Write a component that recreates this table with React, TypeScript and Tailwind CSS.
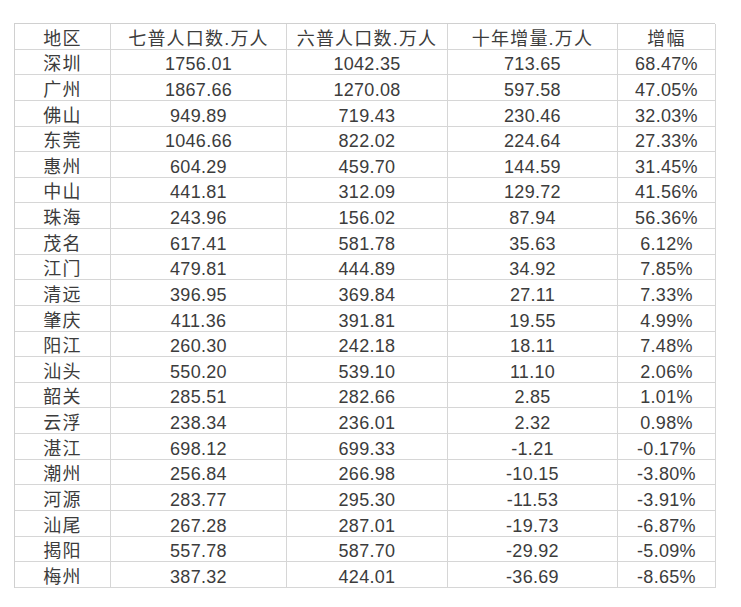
const headers = ['地区', '七普人口数.万人', '六普人口数.万人', '十年增量.万人', '增幅']

const rows: [string, string, string, string, string][] = [
  ['深圳', '1756.01', '1042.35', '713.65', '68.47%'],
  ['广州', '1867.66', '1270.08', '597.58', '47.05%'],
  ['佛山', '949.89', '719.43', '230.46', '32.03%'],
  ['东莞', '1046.66', '822.02', '224.64', '27.33%'],
  ['惠州', '604.29', '459.70', '144.59', '31.45%'],
  ['中山', '441.81', '312.09', '129.72', '41.56%'],
  ['珠海', '243.96', '156.02', '87.94', '56.36%'],
  ['茂名', '617.41', '581.78', '35.63', '6.12%'],
  ['江门', '479.81', '444.89', '34.92', '7.85%'],
  ['清远', '396.95', '369.84', '27.11', '7.33%'],
  ['肇庆', '411.36', '391.81', '19.55', '4.99%'],
  ['阳江', '260.30', '242.18', '18.11', '7.48%'],
  ['汕头', '550.20', '539.10', '11.10', '2.06%'],
  ['韶关', '285.51', '282.66', '2.85', '1.01%'],
  ['云浮', '238.34', '236.01', '2.32', '0.98%'],
  ['湛江', '698.12', '699.33', '-1.21', '-0.17%'],
  ['潮州', '256.84', '266.98', '-10.15', '-3.80%'],
  ['河源', '283.77', '295.30', '-11.53', '-3.91%'],
  ['汕尾', '267.28', '287.01', '-19.73', '-6.87%'],
  ['揭阳', '557.78', '587.70', '-29.92', '-5.09%'],
  ['梅州', '387.32', '424.01', '-36.69', '-8.65%'],
]

function Cell({ text, cjk }: { text: string; cjk?: boolean }) {
  return (
    <div
      className={
        cjk
          ? 'flex items-end justify-center border-r border-b border-[#d6d6d6] text-[18px] leading-none tracking-[1.2px] pb-[1px]'
          : 'flex items-end justify-center border-r border-b border-[#d6d6d6] text-[18px] leading-none tracking-[0.3px] pb-[1px]'
      }
    >
      {text}
    </div>
  )
}

export default function App() {
  return (
    <div
      className="w-[741px] h-[607px] bg-white pt-[23px] pl-[14px] text-[#3c3c3c]"
      style={{ fontFamily: '"Liberation Sans", "Noto Sans CJK SC", sans-serif' }}
    >
      <div className="grid grid-cols-[96px_176px_161px_170px_98px] auto-rows-[25.64px] w-[701px] border-l border-t border-[#d0d0d0]">
        {headers.map((h) => (
          <Cell key={h} text={h} cjk />
        ))}
        {rows.map((r) => (
          <>
            <Cell key={r[0]} text={r[0]} cjk />
            <Cell key={r[0] + '1'} text={r[1]} />
            <Cell key={r[0] + '2'} text={r[2]} />
            <Cell key={r[0] + '3'} text={r[3]} />
            <Cell key={r[0] + '4'} text={r[4]} />
          </>
        ))}
      </div>
    </div>
  )
}
